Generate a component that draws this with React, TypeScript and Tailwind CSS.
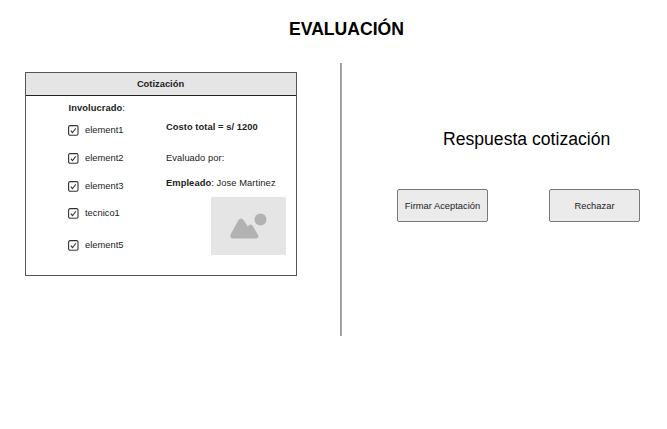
type Item = { label: string; spacing: string };

const items: Item[] = [
  { label: "element1", spacing: "mt-[11px]" },
  { label: "element2", spacing: "mt-[17px]" },
  { label: "element3", spacing: "mt-[16.5px]" },
  { label: "tecnico1", spacing: "mt-4" },
  { label: "element5", spacing: "mt-[21px]" },
];

function CheckItem({ label, spacing }: Item) {
  return (
    <div className={`flex h-[11px] items-center ${spacing}`}>
      <svg className="h-[11px] w-[11px] shrink-0" viewBox="0 0 11 11" fill="none" stroke="#333333">
        <rect x="0.6" y="0.6" width="9.4" height="9.6" rx="1.5" strokeWidth="1.1" />
        <path d="M2.8 5.6 4.5 7.6 7.9 3.2" strokeWidth="1.05" />
      </svg>
      <span className="ml-1.5">{label}</span>
    </div>
  );
}

function ImagePlaceholder() {
  return (
    <div className="ml-[44.5px] mt-2 h-[58px] w-[75px] bg-[#e5e5e5]">
      <svg className="h-full w-full" viewBox="0 0 75 58" fill="#b2b2b2">
        <circle cx="49.5" cy="22.5" r="6" />
        <path d="M27.3 23.2Q30 19.8 32.7 23.2L36.8 29.5Q39.3 25.6 42 29.3L47 38Q48.3 41.4 44.8 41.6H22.2Q18.3 41.2 19.7 37.2Z" />
      </svg>
    </div>
  );
}

function QuoteCard() {
  return (
    <section className="ml-[25px] mt-[9px] h-[204px] w-[272px] border border-[#555555] bg-white text-[9.35px] leading-[11px] text-[#222222]">
      <h2 className="flex h-[23px] items-center justify-center border-b border-[#222222] bg-[#e5e5e5] pr-px font-bold">
        Cotización
      </h2>
      <div className="flex">
        <div className="ml-[42px] w-[98px] pt-[7px]">
          <div className="ml-[0.5px] tracking-[0.08px]">
            <b>Involucrado</b>:
          </div>
          {items.map((item) => (
            <CheckItem key={item.label} {...item} />
          ))}
        </div>
        <div className="whitespace-nowrap pt-[26px]">
          <p className="font-bold tracking-[0.05px]">Costo total = s/ 1200</p>
          <p className="mt-5 tracking-[0.05px]">Evaluado por:</p>
          <p className="mt-3.5 tracking-[0.07px]">
            <b>Empleado</b>: Jose Martinez
          </p>
          <ImagePlaceholder />
        </div>
      </div>
    </section>
  );
}

function ActionButton({ children }: { children: string }) {
  return (
    <button className="h-[33px] w-[91px] whitespace-nowrap rounded-[2px] border border-[#777777] bg-[#ebebeb] pt-px text-[9.35px] leading-[11px] text-[#222222]">
      {children}
    </button>
  );
}

export default function App() {
  return (
    <main className="h-[429px] w-[667px] overflow-hidden bg-white font-['Liberation_Sans',Arial,sans-serif] text-black">
      <h1 className="ml-[289px] pt-[18px] text-[17.6px] font-bold leading-[22px]">EVALUACIÓN</h1>
      <div className="mt-[23px] flex">
        <QuoteCard />
        <div className="ml-[43px] h-[273px] w-[2px] border-l border-[#999999] bg-[#aaaaaa]" />
        <section className="ml-[55px] w-[243px]">
          <h2 className="ml-[46px] mt-[65px] whitespace-nowrap text-[17.6px] leading-[22px]">
            Respuesta cotización
          </h2>
          <div className="mt-[39px] flex justify-between">
            <ActionButton>Firmar Aceptación</ActionButton>
            <ActionButton>Rechazar</ActionButton>
          </div>
        </section>
      </div>
    </main>
  );
}
